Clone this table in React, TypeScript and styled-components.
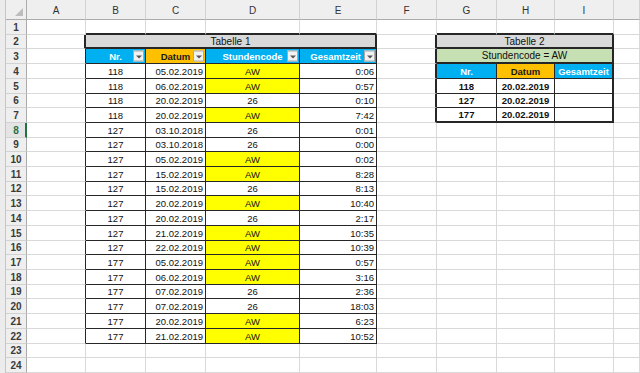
import React from 'react';
import styled, { createGlobalStyle } from 'styled-components';

const GlobalStyle = createGlobalStyle`
  html, body { margin: 0; padding: 0; background: #ffffff; overflow: hidden; }
  body { font-family: "Liberation Sans", Arial, sans-serif; }
`;

// J lies mostly off-screen, its letter is not visible in the view
const COLS = ['A', 'B', 'C', 'D', 'E', 'F', 'G', 'H', 'I', ''];
const COL_W = [59, 60, 60, 94, 77, 60, 60, 58, 59, 26];
const ROW_COUNT = 24;
const ROW_H: number[] = Array.from({ length: ROW_COUNT }, (_, i) =>
  Math.round(20 + (i + 1) * 14.708) - Math.round(20 + i * 14.708)
);

const GRID = '#d9d9d9';
const DARK = '#262626';

const BLUE = '#00b0f0';
const ORANGE = '#ffc000';
const YELLOW = '#ffff00';
const GREY = '#d9d9d9';
const GREEN = '#c6e0b4';

type Rect = { c0: number; c1: number; r0: number; r1: number };
const T1: Rect = { c0: 2, c1: 5, r0: 2, r1: 22 };
const T2: Rect = { c0: 7, c1: 9, r0: 2, r1: 7 };
const inRect = (t: Rect, r: number, c: number) => r >= t.r0 && r <= t.r1 && c >= t.c0 && c <= t.c1;
const inTable = (r: number, c: number) => inRect(T1, r, c) || inRect(T2, r, c);

const rightBorder = (r: number, c: number) => {
  if (!inTable(r, c) && !inTable(r, c + 1)) return `1px solid ${GRID}`;
  const t2Edge = (c === 6 || c === 9) && r >= 2 && r <= 7;
  const t1Title = (c === 1 || c === 5) && r === 2;
  return `${t2Edge || t1Title ? 2 : 1}px solid ${DARK}`;
};
const bottomBorder = (r: number, c: number) => {
  if (!inTable(r, c) && !inTable(r + 1, c)) return `1px solid ${GRID}`;
  const t1 = c >= 2 && c <= 5 && (r === 1 || r === 2);
  const t2 = c >= 7 && c <= 9 && (r === 1 || r === 2 || r === 3 || r === 7);
  return `${t1 || t2 ? 2 : 1}px solid ${DARK}`;
};

type Spec = {
  text?: string;
  bg?: string;
  color?: string;
  bold?: boolean;
  align?: 'left' | 'center' | 'right';
  span?: number;
  filter?: boolean;
  size?: number;
};

const data: [string, string, string, string][] = [
  ['118', '05.02.2019', 'AW', '0:06'],
  ['118', '06.02.2019', 'AW', '0:57'],
  ['118', '20.02.2019', '26', '0:10'],
  ['118', '20.02.2019', 'AW', '7:42'],
  ['127', '03.10.2018', '26', '0:01'],
  ['127', '03.10.2018', '26', '0:00'],
  ['127', '05.02.2019', 'AW', '0:02'],
  ['127', '15.02.2019', 'AW', '8:28'],
  ['127', '15.02.2019', '26', '8:13'],
  ['127', '20.02.2019', 'AW', '10:40'],
  ['127', '20.02.2019', '26', '2:17'],
  ['127', '21.02.2019', 'AW', '10:35'],
  ['127', '22.02.2019', 'AW', '10:39'],
  ['177', '05.02.2019', 'AW', '0:57'],
  ['177', '06.02.2019', 'AW', '3:16'],
  ['177', '07.02.2019', '26', '2:36'],
  ['177', '07.02.2019', '26', '18:03'],
  ['177', '20.02.2019', 'AW', '6:23'],
  ['177', '21.02.2019', 'AW', '10:52'],
];

const summary: [string, string][] = [
  ['118', '20.02.2019'],
  ['127', '20.02.2019'],
  ['177', '20.02.2019'],
];

// returns null if cell is covered by a merge
const specFor = (r: number, c: number): Spec | null => {
  // Table 1
  if (r === 2 && c === 2) return { text: 'Tabelle 1', bg: GREY, align: 'center', span: 4, size: 10 };
  if (r === 2 && c > 2 && c <= 5) return null;
  if (r === 3 && c >= 2 && c <= 5) {
    const heads = ['Nr.', 'Datum', 'Stundencode', 'Gesamtzeit'];
    const isDate = c === 3;
    return {
      text: heads[c - 2],
      bg: isDate ? ORANGE : BLUE,
      color: isDate ? '#1a1a1a' : '#ffffff',
      bold: true,
      align: c === 5 ? 'right' : 'center',
      filter: true,
    };
  }
  if (r >= 4 && r <= 22 && c >= 2 && c <= 5) {
    const row = data[r - 4];
    if (c === 2) return { text: row[0], align: 'center' };
    if (c === 3) return { text: row[1], align: 'right' };
    if (c === 4) return { text: row[2], align: 'center', bg: row[2] === 'AW' ? YELLOW : undefined };
    return { text: row[3], align: 'right' };
  }
  // Table 2
  if (r === 2 && c === 7) return { text: 'Tabelle 2', bg: GREY, align: 'center', span: 3, size: 10 };
  if (r === 3 && c === 7) return { text: 'Stundencode = AW', bg: GREEN, align: 'center', span: 3, size: 10 };
  if ((r === 2 || r === 3) && (c === 8 || c === 9)) return null;
  if (r === 4 && c >= 7 && c <= 9) {
    const heads = ['Nr.', 'Datum', 'Gesamtzeit'];
    const isDate = c === 8;
    return {
      text: heads[c - 7],
      bg: isDate ? ORANGE : BLUE,
      color: isDate ? '#1a1a1a' : '#ffffff',
      bold: true,
      align: 'center',
    };
  }
  if (r >= 5 && r <= 7 && c >= 7 && c <= 9) {
    const row = summary[r - 5];
    if (c === 7) return { text: row[0], bold: true, align: 'center' };
    if (c === 8) return { text: row[1], bold: true, align: 'center' };
    return {};
  }
  return {};
};

const spanEnd = (c: number, span?: number) => c + (span ?? 1) - 1;

/* ---------- styled parts ---------- */

const Sheet = styled.div`
  display: flex;
  width: 640px;
  height: 373px;
  overflow: hidden;
  background: #ffffff;
`;

const OutlineStrip = styled.div`
  flex: none;
  width: 6px;
  height: 373px;
  box-sizing: border-box;
  background: #ececec;
  border-right: 1px solid #c6c6c6;
`;

const Grid = styled.div<{ $cols: string; $rows: string }>`
  display: grid;
  grid-template-columns: ${(p) => p.$cols};
  grid-template-rows: ${(p) => p.$rows};
  flex: none;
`;

const Corner = styled.div`
  position: relative;
  box-sizing: border-box;
  background: #efefef;
  border-right: 1px solid #ababab;
  border-bottom: 1px solid #ababab;
`;

const CornerTriangle = styled.svg`
  position: absolute;
  right: 3px;
  bottom: 3px;
`;

const ColHeader = styled.div`
  box-sizing: border-box;
  background: #efefef;
  border-right: 1px solid #d2d2d2;
  border-bottom: 1px solid #ababab;
  display: flex;
  align-items: center;
  justify-content: center;
  font-size: 10px;
  color: #333333;
  padding-top: 1px;
`;

const RowHeader = styled.div<{ $selected?: boolean }>`
  box-sizing: border-box;
  background: ${(p) => (p.$selected ? '#e4e4e4' : '#efefef')};
  border-bottom: 1px solid #d2d2d2;
  border-right: ${(p) => (p.$selected ? '2px solid #217346' : '1px solid #ababab')};
  display: flex;
  align-items: center;
  justify-content: center;
  font-size: 10px;
  font-weight: bold;
  color: ${(p) => (p.$selected ? '#217346' : '#3a3a3a')};
  padding-left: ${(p) => (p.$selected ? '1px' : '0')};
`;

const Cell = styled.div<{
  $bg?: string;
  $color?: string;
  $bold?: boolean;
  $align?: 'left' | 'center' | 'right';
  $right: string;
  $bottom: string;
  $span: number;
  $size?: number;
  $filter?: boolean;
}>`
  position: relative;
  box-sizing: border-box;
  grid-column: span ${(p) => p.$span};
  background: ${(p) => p.$bg ?? '#ffffff'};
  color: ${(p) => p.$color ?? '#111111'};
  font-weight: ${(p) => (p.$bold ? 'bold' : 'normal')};
  font-size: ${(p) => p.$size ?? 9.5}px;
  border-right: ${(p) => p.$right};
  border-bottom: ${(p) => p.$bottom};
  display: flex;
  align-items: center;
  justify-content: ${(p) =>
    p.$align === 'right' ? 'flex-end' : p.$align === 'center' ? 'center' : 'flex-start'};
  padding: 1px ${(p) => (p.$filter && p.$align === 'right' ? 15 : 2)}px 0 2px;
  white-space: nowrap;
  overflow: hidden;
  line-height: 1;
`;

const FilterButton = styled.span`
  position: absolute;
  right: 1px;
  top: 50%;
  transform: translateY(-50%);
  width: 11px;
  height: 11px;
  box-sizing: border-box;
  background: #f2f2f2;
  border: 1px solid #a9a9a9;
  display: flex;
  align-items: center;
  justify-content: center;
`;

const FilterArrow = styled.span`
  width: 0;
  height: 0;
  border-left: 3px solid transparent;
  border-right: 3px solid transparent;
  border-top: 3px solid #555555;
  margin-top: 1px;
`;

export default function App() {
  const cols = ['21px', ...COL_W.map((w) => `${w}px`)].join(' ');
  const rows = ['20px', ...ROW_H.map((h) => `${h}px`)].join(' ');

  const cells: React.ReactNode[] = [];
  cells.push(
    <Corner key="corner">
      <CornerTriangle width="8" height="8" viewBox="0 0 8 8">
        <polygon points="8,0 8,8 0,8" fill="#bdbdbd" />
      </CornerTriangle>
    </Corner>
  );
  COLS.forEach((name, i) => cells.push(<ColHeader key={`h-${i}`}>{name}</ColHeader>));

  for (let r = 1; r <= ROW_COUNT; r++) {
    cells.push(
      <RowHeader key={`r-${r}`} $selected={r === 8}>
        {r}
      </RowHeader>
    );
    for (let c = 1; c <= COLS.length; c++) {
      const spec = specFor(r, c);
      if (spec === null) continue;
      const end = spanEnd(c, spec.span);
      cells.push(
        <Cell
          key={`c-${r}-${c}`}
          $bg={spec.bg}
          $color={spec.color}
          $bold={spec.bold}
          $align={spec.align}
          $span={spec.span ?? 1}
          $size={spec.size}
          $filter={spec.filter}
          $right={rightBorder(r, end)}
          $bottom={bottomBorder(r, c)}
        >
          {spec.text}
          {spec.filter && (
            <FilterButton>
              <FilterArrow />
            </FilterButton>
          )}
        </Cell>
      );
    }
  }

  return (
    <>
      <GlobalStyle />
      <Sheet>
        <OutlineStrip />
        <Grid $cols={cols} $rows={rows}>
          {cells}
        </Grid>
      </Sheet>
    </>
  );
}
